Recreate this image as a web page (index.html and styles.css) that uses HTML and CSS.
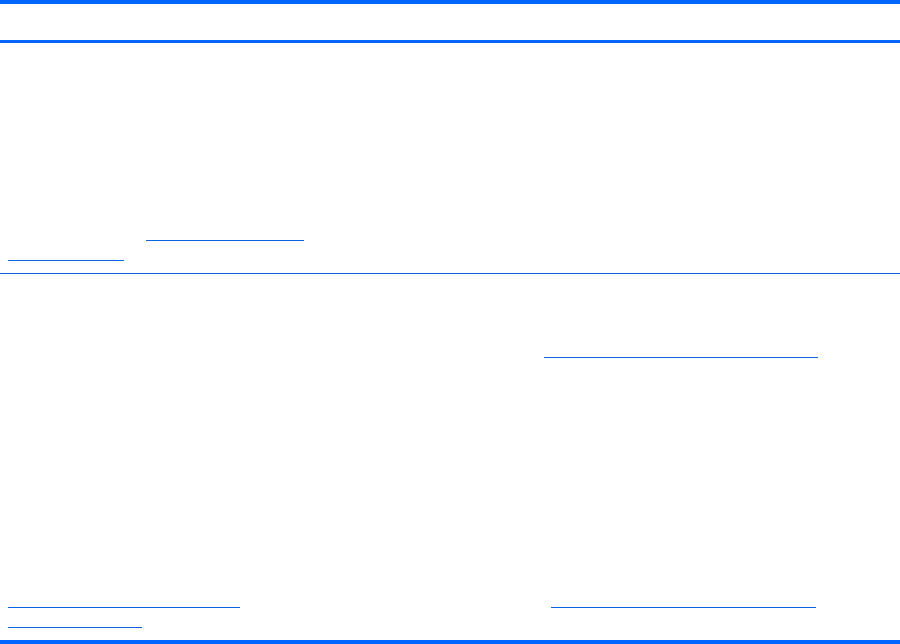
FILE: index.html
```html
<!DOCTYPE html>
<html lang="en">
<head>
  <meta charset="UTF-8" />
  <meta name="viewport" content="width=device-width, initial-scale=1.0" />
  <title>Table</title>
  <link rel="stylesheet" href="styles.css">
</head>
<body>
  <div class="doc-table">
    <div class="head-row"></div>

    <div class="row first">
      <div class="cell bottom">
        <a class="link" href="#" style="margin-left: 138px; width: 158px;"></a>
        <a class="link" href="#" style="width: 116px;"></a>
      </div>
      <div class="cell"></div>
    </div>

    <div class="row last">
      <div class="cell bottom">
        <a class="link" href="#" style="width: 232px;"></a>
        <a class="link" href="#" style="width: 134px;"></a>
      </div>
      <div class="cell split">
        <a class="link" href="#" style="width: 274px;"></a>
        <a class="link tail" href="#" style="width: 265px;"></a>
      </div>
    </div>
  </div>
</body>
</html>
```

FILE: styles.css
```css
body {
  margin: 0;
  padding: 0;
  background: #fff;
  font-family: 'Liberation Sans', Arial, sans-serif;
  font-size: 13px;
  color: #000;
}
.doc-table {
  width: 900px;
  height: 644px;
  display: flex;
  flex-direction: column;
  border-top: 4px solid #0066ff;
  border-bottom: 4px solid #0066ff;
  box-sizing: border-box;
}
.head-row {
  height: 36px;
  border-bottom: 3px solid #0066ff;
}
.row {
  display: grid;
  grid-template-columns: 536px 1fr;
}
.row.first {
  height: 230px;
  border-bottom: 1px solid #0f62e0;
}
.row.last {
  flex: 1;
}
.cell {
  padding: 0 8px;
  display: flex;
  flex-direction: column;
}
.cell.bottom {
  justify-content: flex-end;
  gap: 19px;
  padding-bottom: 12px;
}
.cell.split {
  padding-top: 83px;
  padding-bottom: 32px;
}
.link {
  display: block;
  height: 1px;
  background: #0f62e0;
}
.link.tail {
  margin-top: auto;
  margin-left: 7px;
}
```
